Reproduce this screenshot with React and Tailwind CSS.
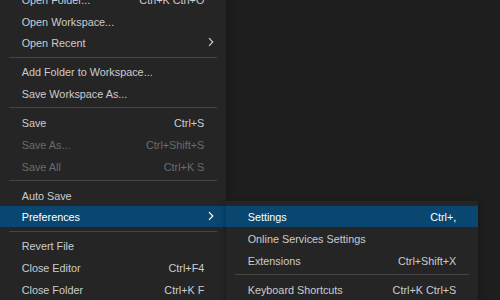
import React from "react";

const mainItems = [
  { label: "Open Folder...", keys: "Ctrl+K Ctrl+O" },
  { label: "Open Workspace..." },
  { label: "Open Recent", sub: true },
  { sep: true },
  { label: "Add Folder to Workspace..." },
  { label: "Save Workspace As..." },
  { sep: true },
  { label: "Save", keys: "Ctrl+S" },
  { label: "Save As...", keys: "Ctrl+Shift+S", disabled: true },
  { label: "Save All", keys: "Ctrl+K S", disabled: true },
  { sep: true },
  { label: "Auto Save" },
  { label: "Preferences", sub: true, active: true },
  { sep: true },
  { label: "Revert File" },
  { label: "Close Editor", keys: "Ctrl+F4" },
  { label: "Close Folder", keys: "Ctrl+K F" },
];

const prefItems = [
  { label: "Settings", keys: "Ctrl+,", active: true },
  { label: "Online Services Settings" },
  { label: "Extensions", keys: "Ctrl+Shift+X" },
  { sep: true },
  { label: "Keyboard Shortcuts", keys: "Ctrl+K Ctrl+S" },
];

function Chevron() {
  return (
    <svg width="6" height="10" viewBox="0 0 6 10" className="absolute right-[12px] top-1/2 -translate-y-1/2">
      <path d="M1 1.2 L4.8 5 L1 8.8" fill="none" stroke="currentColor" strokeWidth="1.2" />
    </svg>
  );
}

function MenuList({ items }) {
  return (
    <div className="flex flex-col">
      {items.map((it, i) =>
        it.sep ? (
          <div key={i} className="pt-[3.5px] pb-[3px] px-[8.7px]">
            <div className="h-px bg-[#454545]" />
          </div>
        ) : (
          <div
            key={i}
            className={`relative flex items-center h-[21.67px] pt-[2px] px-[21.67px] whitespace-nowrap ${
              it.active ? "bg-[#094771] text-white" : it.disabled ? "text-[#6b6b6b]" : "text-[#cccccc]"
            }`}
          >
            <span className="flex-1">{it.label}</span>
            {it.keys && <span className="pl-[20px]">{it.keys}</span>}
            {it.sub && <Chevron />}
          </div>
        )
      )}
    </div>
  );
}

export default function App() {
  return (
    <div className="relative w-[500px] h-[300px] overflow-hidden bg-[#1e1e1e] font-['Liberation_Sans',Arial,sans-serif] text-[10.83px]">
      <div className="w-[226px] -mt-[11.8px] bg-[#252526] shadow-[0_2px_8px_rgba(0,0,0,0.36)]">
        <MenuList items={mainItems} />
      </div>
      <div className="absolute left-[226px] top-[201px] w-[252px] h-[110px] pt-[4.7px] bg-[#252526] shadow-[0_2px_8px_rgba(0,0,0,0.36)]">
        <MenuList items={prefItems} />
      </div>
    </div>
  );
}
